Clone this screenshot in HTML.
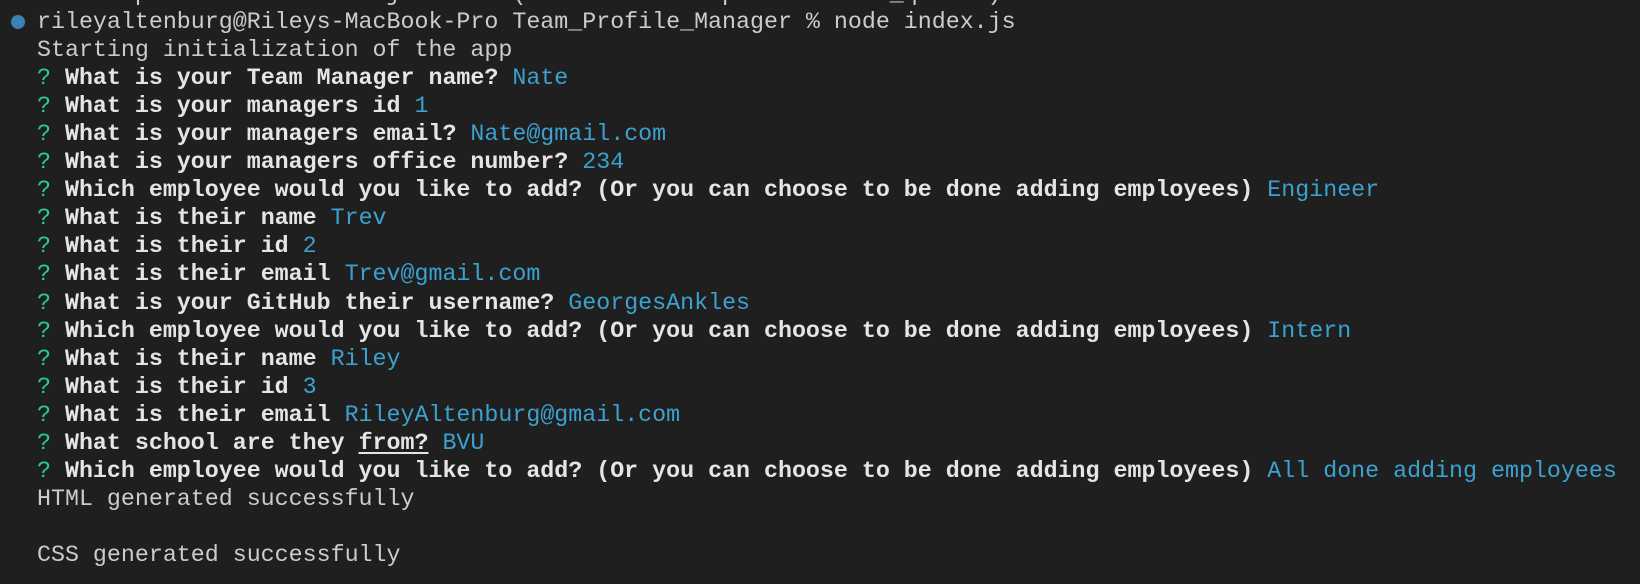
<!DOCTYPE html>
<html><head><meta charset="utf-8"><style>
html,body{margin:0;padding:0;background:#1f1f1f;width:1640px;height:584px;overflow:hidden}
.t{position:absolute;left:37px;top:-20px;font-family:"Liberation Mono",monospace;font-size:23.3px;line-height:28.05px;color:#cccccc;white-space:pre}
b{font-weight:bold;color:#e5e5e5}
.g{color:#23d18b}.c{color:#3ba2d0}
.dot{position:absolute;left:11px;top:15px;width:14px;height:14px;border-radius:50%;background:#3a82b5}
u{text-decoration:underline;text-underline-offset:3px}
</style></head><body>
<div class="dot"></div>
<div class="t">    at process.ticksAndRejections (node:internal/process/task_queues)
rileyaltenburg@Rileys-MacBook-Pro Team_Profile_Manager % node index.js
Starting initialization of the app
<span class="g">?</span> <b>What is your Team Manager name?</b> <span class="c">Nate</span>
<span class="g">?</span> <b>What is your managers id</b> <span class="c">1</span>
<span class="g">?</span> <b>What is your managers email?</b> <span class="c">Nate@gmail.com</span>
<span class="g">?</span> <b>What is your managers office number?</b> <span class="c">234</span>
<span class="g">?</span> <b>Which employee would you like to add? (Or you can choose to be done adding employees)</b> <span class="c">Engineer</span>
<span class="g">?</span> <b>What is their name</b> <span class="c">Trev</span>
<span class="g">?</span> <b>What is their id</b> <span class="c">2</span>
<span class="g">?</span> <b>What is their email</b> <span class="c">Trev@gmail.com</span>
<span class="g">?</span> <b>What is your GitHub their username?</b> <span class="c">GeorgesAnkles</span>
<span class="g">?</span> <b>Which employee would you like to add? (Or you can choose to be done adding employees)</b> <span class="c">Intern</span>
<span class="g">?</span> <b>What is their name</b> <span class="c">Riley</span>
<span class="g">?</span> <b>What is their id</b> <span class="c">3</span>
<span class="g">?</span> <b>What is their email</b> <span class="c">RileyAltenburg@gmail.com</span>
<span class="g">?</span> <b>What school are they <u>from?</u></b> <span class="c">BVU</span>
<span class="g">?</span> <b>Which employee would you like to add? (Or you can choose to be done adding employees)</b> <span class="c">All done adding employees</span>
HTML generated successfully

CSS generated successfully</div>
</body></html>
